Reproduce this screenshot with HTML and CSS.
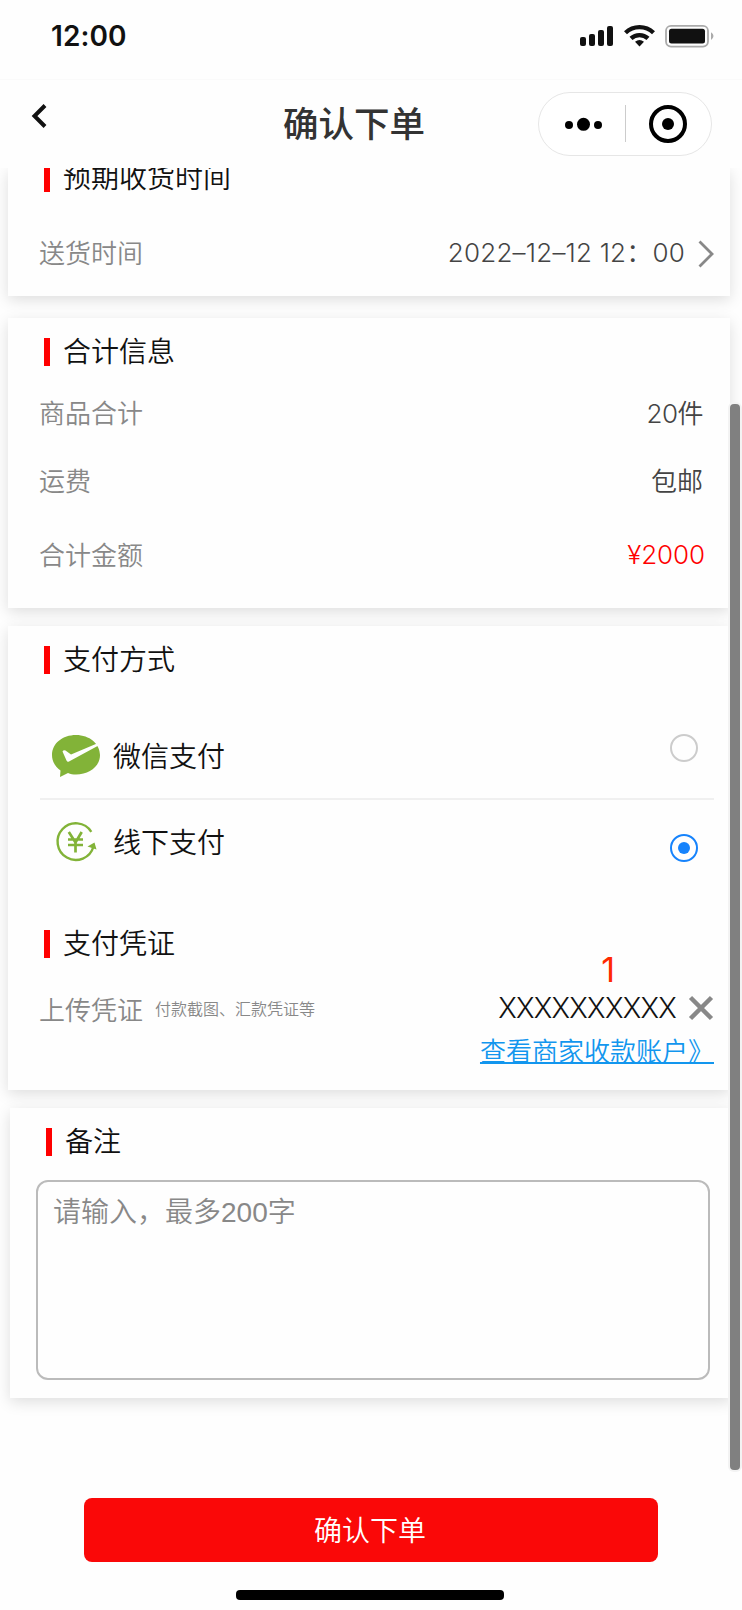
FILE: index.html
```html
<!DOCTYPE html>
<html lang="zh-CN">
<head>
<meta charset="utf-8">
<title>确认下单</title>
<link rel="stylesheet" href="styles.css">
</head>
<body>
<div class="screen">
  <div class="status-bar">
    <span class="clock">12:00</span>
    <svg class="status-icons" width="138" height="26" viewBox="0 0 138 26">
      <g fill="#111">
        <rect x="1" y="14" width="6" height="9" rx="2"/>
        <rect x="10" y="11" width="6" height="12" rx="2"/>
        <rect x="19" y="7" width="6" height="16" rx="2"/>
        <rect x="28" y="3" width="6" height="20" rx="2"/>
      </g>
      <g fill="none" stroke="#111" stroke-width="4.3">
        <path d="M46.5 9.8a20.3 20.3 0 0 1 28 0"/>
        <path d="M52 15.4a12.4 12.4 0 0 1 17 0"/>
      </g>
      <path d="M56 18.8q4.500-3.600 9 0l-4.500 4.700z" fill="#111"/>
      <rect x="87" y="2.800" width="42" height="20.800" rx="5" fill="none" stroke="#aaa" stroke-width="1.800"/>
      <rect x="90" y="5.700" width="36" height="14.800" rx="2.500" fill="#111"/>
      <path d="M132 9.300q2.500 1.500 2.500 3.800t-2.500 3.800z" fill="#aaa"/>
    </svg>
  </div>
  <header class="nav-bar">
    <svg class="back" width="16" height="26" viewBox="0 0 16 26"><path d="M14 2.500L3.500 13L14 23.500" fill="none" stroke="#111" stroke-width="4"/></svg>
    <h1 class="title">确认下单</h1>
    <svg class="capsule" width="174" height="64" viewBox="0 0 174 64">
      <rect x=".5" y=".5" width="173" height="63" rx="31.500" fill="#fff" stroke="#e6e6e6"/>
      <circle cx="31" cy="33" r="4"/><circle cx="45.500" cy="32.300" r="6.500"/><circle cx="60" cy="33" r="4"/>
      <path d="M87.500 13v37" stroke="#ccc"/>
      <circle cx="130" cy="32" r="17" fill="none" stroke="#000" stroke-width="4"/><circle cx="130" cy="32" r="6"/>
    </svg>
  </header>

  <main class="content">
    <section class="card delivery">
      <h2 class="heading">预期收货时间</h2>
      <div class="row time-row">
        <span class="label">送货时间</span>
        <span class="value date">2022–12–12 12：00</span>
        <svg width="16" height="28" viewBox="0 0 16 28"><path d="M1.500 1.500L14 14L1.500 26.500" fill="none" stroke="#888" stroke-width="2.800"/></svg>
      </div>
    </section>

    <section class="card totals">
      <h2 class="heading">合计信息</h2>
      <div class="row count-row"><span class="label">商品合计</span><span class="value count">20件</span></div>
      <div class="row freight-row"><span class="label">运费</span><span class="value">包邮</span></div>
      <div class="row amount-row"><span class="label">合计金额</span><span class="value price">¥2000</span></div>
    </section>

    <section class="card payment">
      <h2 class="heading">支付方式</h2>
      <div class="option wechat">
        <svg class="pay-icon" width="50" height="44" viewBox="0 0 50 44">
          <path d="M25 1C11.500 1 1 9.500 1 21c0 6.500 3.500 12 8.500 15.500L9 43l8-4c2.500 1 5 1.500 8 1.500 13.500 0 24-8.300 24-19.500S38.500 1 25 1z" fill="#82b338"/>
          <path d="M11.500 17.500q1-2 3-1L20 20.500L46 9.500L47.500 11.500L18 27.500Q16.300 28.300 15.500 26.500z" fill="#fefefe"/>
        </svg>
        <span class="option-name">微信支付</span>
        <i class="radio"></i>
      </div>
      <div class="option offline">
        <svg class="pay-icon" width="50" height="44" viewBox="0 0 50 44">
          <g fill="none" stroke="#82b338" stroke-width="2.400">
            <path d="M40.300 11.800A18.300 18.300 0 1 0 42.500 26.500"/>
            <path d="M17.800 12l6.700 10.500l6.200-10.500M17 19.500h15M17 25h15M24.500 20.500v12" stroke-width="2.700"/>
          </g>
          <path d="M43.500 22.500l-7 4l9 3z" fill="#82b338"/>
        </svg>
        <span class="option-name">线下支付</span>
        <i class="radio checked"></i>
      </div>
      <h2 class="heading">支付凭证</h2>
      <div class="voucher">
        <div class="voucher-label"><span class="label">上传凭证</span><small class="hint">付款截图、汇款凭证等</small></div>
        <div class="voucher-file">
          <span class="marker">1</span>
          <div class="file"><span class="file-name">XXXXXXXXXX</span>
            <svg width="26" height="26" viewBox="0 0 26 26"><path d="M2.500 2.500L23.500 23.500M23.500 2.500L2.500 23.500" stroke="#888" stroke-width="4.500"/></svg>
          </div>
          <a class="account">查看商家收款账户》</a>
        </div>
      </div>
    </section>

    <section class="card remark">
      <h2 class="heading">备注</h2>
      <div class="textarea">请输入，最多200字</div>
    </section>
  </main>

  <footer class="footer">
    <div class="submit">确认下单</div>
    <div class="home-indicator"></div>
  </footer>
  <div class="scrollbar"></div>
</div>
</body>
</html>
```
FILE: styles.css
```css
* { box-sizing: border-box; }
body { margin: 0; background: #fff; }
.screen {
  position: relative;
  width: 742px;
  height: 1610px;
  overflow: hidden;
  background: #fefefe;
  color: #111;
  font-family: Inter, "Noto Sans CJK SC", sans-serif;
  font-weight: 350;
  font-size: 26px;
}
svg { display: block; flex: none; }
.status-bar {
  display: flex;
  justify-content: space-between;
  align-items: flex-start;
  height: 80px;
  padding: 23px 25px 0 51px;
  border-bottom: 1px solid #fafafa;
}
.clock { font-size: 28px; font-weight: 600; line-height: 27px; letter-spacing: .1px; }
.nav-bar {
  display: grid;
  grid-template-columns: 252px 1fr 174px;
  height: 88px;
  padding: 0 30px 0 31px;
}
.back { margin-top: 23px; }
.title {
  margin: 0;
  padding-top: 18px;
  font-size: 35.500px;
  font-weight: 500;
  line-height: 54px;
  color: #333;
}
.capsule { margin-top: 12px; }
.content {
  height: 1306px;
  padding: 0 12px 0 8px;
  overflow: hidden;
  display: flex;
  flex-direction: column;
}
.card { flex: none; background: #fefefe; box-shadow: 0 4px 14px rgba(0, 0, 0, .13); }
.heading {
  display: flex;
  align-items: center;
  gap: 13px;
  height: 28px;
  margin: 0 0 0 36px;
  font-size: 28px;
  font-weight: 350;
  line-height: 30px;
}
.heading::before { content: ""; width: 6px; height: 28px; background: #f00; }
.row {
  display: flex;
  justify-content: space-between;
  align-items: center;
  height: 40px;
  line-height: 40px;
  padding: 0 27px 0 31px;
}
.label { color: #888; }
.value { color: #444; }
.delivery { height: 128px; margin-bottom: 22px; }
.delivery .heading { margin-top: -4px; line-height: 30px; }
.time-row { margin-top: 42px; padding-right: 16px; }
.date { margin-left: auto; margin-right: 13px; letter-spacing: .2px; line-height: 38px; padding-bottom: 2px; }
.totals { height: 290px; margin-bottom: 18px; padding-top: 20px; }
.count-row { margin-top: 28px; }
.count { letter-spacing: -.5px; }
.freight-row { margin-top: 28px; }
.amount-row { margin-top: 34px; padding-right: 25px; }
.price { color: #f00; letter-spacing: -.1px; line-height: 38px; padding-bottom: 2px; }
.payment { height: 464px; margin-bottom: 18px; padding-top: 20px; }
.option {
  display: flex;
  align-items: flex-start;
  margin: 0 16px 0 32px;
  padding-left: 11px;
  font-size: 28px;
  line-height: 40px;
}
.wechat { height: 126px; padding-top: 60px; border-bottom: 2px solid #f0f0f0; }
.offline { height: 130px; padding-top: 20px; }
.option-name { margin-left: 12px; margin-top: 3px; }
.radio {
  display: flex;
  align-items: center;
  justify-content: center;
  width: 28px;
  height: 28px;
  margin: 0 16px 0 auto;
  border: 2px solid #ccc;
  border-radius: 50%;
}
.checked { margin-top: 14px; border-color: #1683fc; }
.checked::before { content: ""; width: 12px; height: 12px; border-radius: 50%; background: #1683fc; }
.voucher {
  display: flex;
  justify-content: space-between;
  padding: 0 16px 0 31px;
}
.voucher-label { display: flex; align-items: center; height: 40px; margin-top: 30px; }
.hint { margin-left: 12px; font-size: 16px; color: #888; }
.voucher-file { display: flex; flex-direction: column; align-items: flex-end; margin-top: -8px; }
.marker { margin-right: 99px; font-size: 34px; font-weight: 400; line-height: 40px; color: #ff2a00; }
.file { display: flex; align-items: center; gap: 12px; height: 36px; font-size: 28px; }
.file-name { letter-spacing: -.75px; }
.account {
  margin-top: 8px;
  color: #1296ee;
  line-height: 36px;
  height: 38px;
  text-decoration: underline;
  text-decoration-thickness: 2px;
}
.remark { width: 722px; height: 290px; margin-left: 2px; padding-top: 20px; }
.textarea {
  width: 674px;
  height: 200px;
  margin: 24px 0 0 26px;
  padding: 11px 15px;
  border: 2px solid #bbb;
  border-radius: 12px;
  font-family: "Liberation Sans", "Noto Sans CJK SC", sans-serif;
  font-size: 28px;
  line-height: 40px;
  color: #888;
}
.footer { display: flex; flex-direction: column; align-items: flex-start; padding: 24px 0 0 84px; }
.submit {
  width: 574px;
  height: 64px;
  padding-right: 2px;
  border-radius: 8px;
  background: #fa0808;
  color: #fff;
  font-size: 28px;
  line-height: 66px;
  text-align: center;
}
.home-indicator { width: 268px; height: 10px; margin: 28px 0 0 152px; border-radius: 4px; background: #000; }
.scrollbar {
  position: absolute;
  top: 404px;
  right: 2px;
  width: 10px;
  height: 1066px;
  border-radius: 4px;
  background: #808080;
  box-shadow: 0 0 0 2px #f3f3f3;
}
```
